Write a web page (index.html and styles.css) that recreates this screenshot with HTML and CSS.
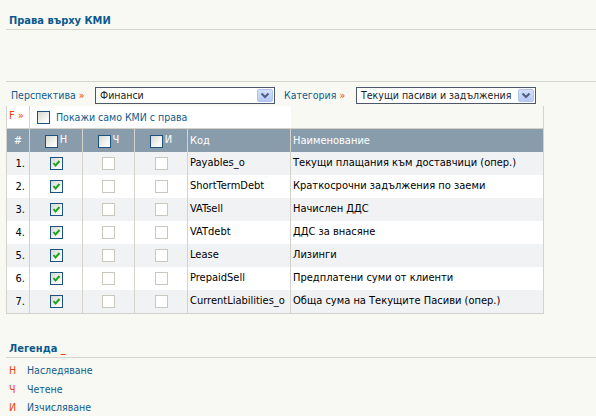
FILE: index.html
```html
<!DOCTYPE html>
<html lang="bg">
<head>
<meta charset="utf-8">
<title>Права върху КМИ</title>
<link rel="stylesheet" href="styles.css">
</head>
<body>
<div class="page">
  <h1 class="title">Права върху КМИ</h1>
  <div class="blank"></div>

  <div class="filters">
    <span class="lbl lbl-persp">Перспектива <span class="raquo">»</span></span>
    <div class="select"><span class="val">Финанси</span><span class="btn"><svg width="10" height="7" viewBox="0 0 10 7"><polyline points="1.5,1.5 5,5 8.5,1.5" fill="none" stroke="#4d5f82" stroke-width="2"/></svg></span></div>
    <span class="lbl lbl-cat">Категория <span class="raquo">»</span></span>
    <div class="select"><span class="val">Текущи пасиви и задължения</span><span class="btn"><svg width="10" height="7" viewBox="0 0 10 7"><polyline points="1.5,1.5 5,5 8.5,1.5" fill="none" stroke="#4d5f82" stroke-width="2"/></svg></span></div>
  </div>

  <div class="grid">
    <div class="row frow">
      <div class="c f">F <span class="raquo">»</span></div>
      <div class="c show"><span class="cb cb-on"></span><span class="show-lbl">Покажи само КМИ с права</span></div>
      <div class="c emp"></div>
    </div>
    <div class="row head">
      <div class="c hnum">#</div>
      <div class="c hcb"><span class="cb cb-on"></span><span class="hl">Н</span></div>
      <div class="c hcb"><span class="cb cb-on"></span><span class="hl">Ч</span></div>
      <div class="c hcb"><span class="cb cb-on"></span><span class="hl">И</span></div>
      <div class="c htxt">Код</div>
      <div class="c htxt">Наименование</div>
    </div>

    <div class="row body odd">
      <div class="c num">1.</div>
      <div class="c bcb"><span class="cb cb-on"><svg class="tick" width="11" height="11" viewBox="0 0 11 11"><polyline points="2.5,5 4.5,7.5 8.5,3" fill="none" stroke="#21a321" stroke-width="2"/></svg></span></div>
      <div class="c bcb"><span class="cb cb-off"></span></div>
      <div class="c bcb"><span class="cb cb-off"></span></div>
      <div class="c txt">Payables_o</div>
      <div class="c txt">Текущи плащания към доставчици (опер.)</div>
    </div>
    <div class="row body even">
      <div class="c num">2.</div>
      <div class="c bcb"><span class="cb cb-on"><svg class="tick" width="11" height="11" viewBox="0 0 11 11"><polyline points="2.5,5 4.5,7.5 8.5,3" fill="none" stroke="#21a321" stroke-width="2"/></svg></span></div>
      <div class="c bcb"><span class="cb cb-off"></span></div>
      <div class="c bcb"><span class="cb cb-off"></span></div>
      <div class="c txt">ShortTermDebt</div>
      <div class="c txt">Краткосрочни задължения по заеми</div>
    </div>
    <div class="row body odd">
      <div class="c num">3.</div>
      <div class="c bcb"><span class="cb cb-on"><svg class="tick" width="11" height="11" viewBox="0 0 11 11"><polyline points="2.5,5 4.5,7.5 8.5,3" fill="none" stroke="#21a321" stroke-width="2"/></svg></span></div>
      <div class="c bcb"><span class="cb cb-off"></span></div>
      <div class="c bcb"><span class="cb cb-off"></span></div>
      <div class="c txt">VATsell</div>
      <div class="c txt">Начислен ДДС</div>
    </div>
    <div class="row body even">
      <div class="c num">4.</div>
      <div class="c bcb"><span class="cb cb-on"><svg class="tick" width="11" height="11" viewBox="0 0 11 11"><polyline points="2.5,5 4.5,7.5 8.5,3" fill="none" stroke="#21a321" stroke-width="2"/></svg></span></div>
      <div class="c bcb"><span class="cb cb-off"></span></div>
      <div class="c bcb"><span class="cb cb-off"></span></div>
      <div class="c txt">VATdebt</div>
      <div class="c txt">ДДС за внасяне</div>
    </div>
    <div class="row body odd">
      <div class="c num">5.</div>
      <div class="c bcb"><span class="cb cb-on"><svg class="tick" width="11" height="11" viewBox="0 0 11 11"><polyline points="2.5,5 4.5,7.5 8.5,3" fill="none" stroke="#21a321" stroke-width="2"/></svg></span></div>
      <div class="c bcb"><span class="cb cb-off"></span></div>
      <div class="c bcb"><span class="cb cb-off"></span></div>
      <div class="c txt">Lease</div>
      <div class="c txt">Лизинги</div>
    </div>
    <div class="row body even">
      <div class="c num">6.</div>
      <div class="c bcb"><span class="cb cb-on"><svg class="tick" width="11" height="11" viewBox="0 0 11 11"><polyline points="2.5,5 4.5,7.5 8.5,3" fill="none" stroke="#21a321" stroke-width="2"/></svg></span></div>
      <div class="c bcb"><span class="cb cb-off"></span></div>
      <div class="c bcb"><span class="cb cb-off"></span></div>
      <div class="c txt">PrepaidSell</div>
      <div class="c txt">Предплатени суми от клиенти</div>
    </div>
    <div class="row body odd">
      <div class="c num">7.</div>
      <div class="c bcb"><span class="cb cb-on"><svg class="tick" width="11" height="11" viewBox="0 0 11 11"><polyline points="2.5,5 4.5,7.5 8.5,3" fill="none" stroke="#21a321" stroke-width="2"/></svg></span></div>
      <div class="c bcb"><span class="cb cb-off"></span></div>
      <div class="c bcb"><span class="cb cb-off"></span></div>
      <div class="c txt">CurrentLiabilities_o</div>
      <div class="c txt">Обща сума на Текущите Пасиви (опер.)</div>
    </div>
  </div>

  <div class="legend">
    <h2 class="ltitle">Легенда <span class="red">_</span></h2>
    <ul class="litems">
      <li><span class="key">Н</span>Наследяване</li>
      <li><span class="key">Ч</span>Четене</li>
      <li><span class="key">И</span>Изчисляване</li>
    </ul>
  </div>
</div>
</body>
</html>
```

FILE: styles.css
```css
* { box-sizing: border-box; }
html, body { margin: 0; padding: 0; }
body {
  background: #f9f9f4;
  font-family: "DejaVu Sans Condensed", "DejaVu Sans", sans-serif;
  font-size: 11px;
  color: #000;
  width: 596px;
  height: 416px;
  overflow: hidden;
}
.page { padding-left: 6px; }

.title {
  margin: 0;
  height: 30px;
  padding: 14px 0 0 3px;
  border-bottom: 1px solid #d5d5cf;
  font-size: 11px;
  line-height: 13px;
  font-weight: bold;
  color: #0b5a8d;
}
.blank { height: 52px; border-bottom: 1px solid #d5d5cf; }

.filters {
  display: flex;
  align-items: center;
  margin-top: 5px;
  height: 17px;
  padding-left: 5px;
  font-size: 10.5px;
}
.lbl { color: #105b8c; white-space: nowrap; line-height: 17px; }
.lbl-persp { width: 84px; }
.lbl-cat { width: 72px; margin-left: 9px; }
.raquo { color: #f0400a; }
.select {
  width: 180px;
  height: 17px;
  border: 1px solid #4d596a;
  background: #fff;
  display: flex;
  align-items: center;
  justify-content: space-between;
  padding: 0 1px 0 4px;
}
.val { color: #222; line-height: 15px; white-space: nowrap; }
.btn {
  width: 16px;
  height: 13px;
  border: 1px solid #b3c5ee;
  border-radius: 2px;
  background: linear-gradient(#d3e0fd, #b6c9f5);
  display: flex;
  align-items: center;
  justify-content: center;
}

.grid {
  margin-top: 2px;
  width: 538px;
  border-left: 1px solid #d4d2ca;
  border-bottom: 1px solid #d4d2ca;
}
.row {
  display: grid;
  grid-template-columns: 23px 53px 52px 53px 103px 253px;
}
.c { border-right: 1px solid #d4d2ca; }

.frow { height: 22px; }
.frow .f {
  background: #fff;
  color: #f0400a;
  padding: 3px 0 0 2px;
  line-height: 14px;
}
.frow .show {
  grid-column: 2 / 6;
  background: #fff;
  border-right: none;
  display: flex;
  align-items: center;
  padding-left: 7px;
}
.show-lbl { color: #105b8c; margin-left: 6px; font-size: 10.5px; }
.frow .emp { background: transparent; }

.head {
  height: 24px;
  border-top: 1px solid #d4d2ca;
  background: #899cab;
  color: #fff;
}
.hnum { display: flex; align-items: center; justify-content: center; }
.hcb {
  display: flex;
  justify-content: center;
  align-items: flex-start;
  padding-top: 6px;
  gap: 2px;
}
.hl { line-height: 11px; margin-top: -1px; }
.htxt { display: flex; align-items: center; padding-left: 2px; }

.body { height: 23px; }
.odd { background: #f1f2f4; }
.even { background: #fff; }
.num {
  display: flex;
  align-items: center;
  justify-content: flex-end;
  padding-right: 4px;
}
.bcb { display: flex; align-items: center; justify-content: center; }
.txt { padding: 4px 0 0 2px; line-height: 13px; white-space: nowrap; overflow: hidden; }

.cb {
  display: inline-block;
  width: 13px;
  height: 13px;
  flex: none;
  position: relative;
}
.cb-on {
  border: 1px solid #1c5180;
  background: linear-gradient(135deg, #d8d8d0 0%, #f4f4f0 60%, #ffffff 100%);
}
.cb-off { border: 1px solid #cac8bc; background: #fff; }
.tick { display: block; }

.legend { margin-top: 27px; }
.ltitle {
  margin: 0;
  height: 17px;
  padding: 1px 0 0 3px;
  border-bottom: 1px solid #d5d5cf;
  font-size: 11px;
  line-height: 13px;
  font-weight: bold;
  color: #0b5a8d;
}
.red { color: #f0400a; }
.litems { list-style: none; margin: 3px 0 0; padding: 0 0 0 3px; font-size: 10.5px; }
.litems li { line-height: 18.5px; color: #105b8c; }
.key { display: inline-block; width: 18px; color: #f0400a; }
```
